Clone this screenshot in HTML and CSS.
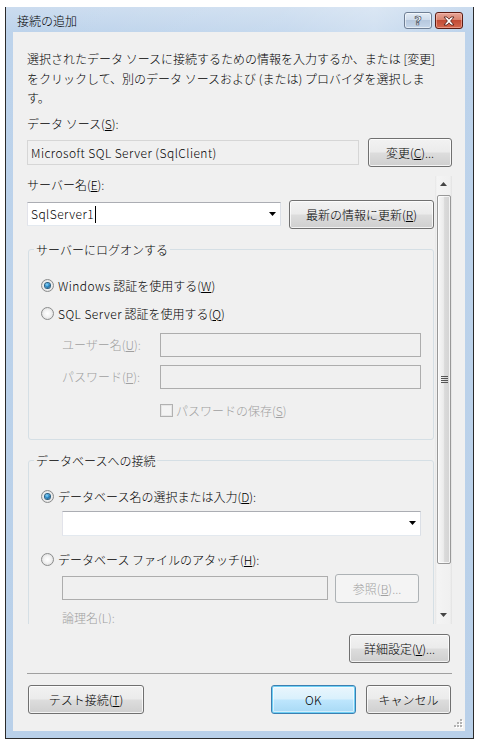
FILE: index.html
```html
<!DOCTYPE html>
<html lang="ja">
<head>
<meta charset="utf-8">
<title>接続の追加</title>
<link rel="stylesheet" href="styles.css">
</head>
<body>
<div class="window">
  <div class="titlebar">
    <span class="title">接続の追加</span>
    <div class="caption-buttons">
      <span class="cap-btn help">?</span>
      <span class="cap-btn close">
        <svg width="14" height="10" viewBox="0 0 14 10"><path d="M2 1h3l2 2.2L9 1h3L8.6 5 12 9H9L7 6.8 5 9H2l3.4-4z" fill="#fff" stroke="#4a1510" stroke-width="0.8" stroke-linejoin="round"/></svg>
      </span>
    </div>
  </div>
  <div class="client">
    <p class="desc">選択されたデータ ソースに接続するための情報を入力するか、または [変更]<br>をクリックして、別のデータ ソースおよび (または) プロバイダを選択しま<br>す。</p>
    <div class="label first-label">データ ソース(<u>S</u>):</div>
    <div class="ds-row">
      <div class="textbox readonly ds-box"><span class="latin">Microsoft SQL Server (SqlClient)</span></div>
      <button class="btn change-btn">変更(<u>C</u>)...</button>
    </div>

    <div class="scroll-panel">
      <div class="scroll-content">
        <div class="label">サーバー名(<u>E</u>):</div>
        <div class="server-row">
          <div class="combo server-combo">
            <span class="combo-text"><span class="latin">SqlServer1</span><span class="caret"></span></span>
            <svg class="arrow" width="7" height="4" viewBox="0 0 7 4"><path d="M0 0h7L3.5 4z" fill="#000"/></svg>
          </div>
          <button class="btn refresh-btn">最新の情報に更新(<u>R</u>)</button>
        </div>

        <fieldset class="group">
          <legend>サーバーにログオンする</legend>
          <div class="group-body">
            <div class="opt-row">
              <span class="radio checked"></span><span><span class="latin">Windows</span> 認証を使用する(<u>W</u>)</span>
            </div>
            <div class="opt-row gap10">
              <span class="radio"></span><span><span class="latin">SQL Server</span> 認証を使用する(<u>Q</u>)</span>
            </div>
            <div class="field-row user-row">
              <span class="field-label disabled">ユーザー名(<u>U</u>):</span>
              <div class="textbox disabled-box grow"></div>
            </div>
            <div class="field-row pass-row">
              <span class="field-label disabled">パスワード(<u>P</u>):</span>
              <div class="textbox disabled-box grow"></div>
            </div>
            <div class="check-row">
              <span class="checkbox"></span><span class="disabled">パスワードの保存(<u>S</u>)</span>
            </div>
          </div>
        </fieldset>

        <fieldset class="group group2">
          <legend>データベースへの接続</legend>
          <div class="group-body">
            <div class="opt-row">
              <span class="radio checked"></span><span>データベース名の選択または入力(<u>D</u>):</span>
            </div>
            <div class="combo db-combo">
              <span class="combo-text"></span>
              <svg class="arrow" width="7" height="4" viewBox="0 0 7 4"><path d="M0 0h7L3.5 4z" fill="#000"/></svg>
            </div>
            <div class="opt-row gap15">
              <span class="radio"></span><span>データベース ファイルのアタッチ(<u>H</u>):</span>
            </div>
            <div class="attach-row">
              <div class="textbox disabled-box attach-box"></div>
              <button class="btn disabled-btn browse-btn">参照(<u>B</u>)...</button>
            </div>
            <div class="logical-label disabled">論理名(<u>L</u>):</div>
            <div class="textbox disabled-box logical-box"></div>
          </div>
        </fieldset>
      </div>
      <div class="scrollbar">
        <div class="sb-arrow">
          <svg width="7" height="4" viewBox="0 0 7 4"><path d="M0 4h7L3.5 0z" fill="#444"/></svg>
        </div>
        <div class="sb-track">
          <div class="sb-thumb"><span class="grip-lines"></span></div>
        </div>
        <div class="sb-arrow">
          <svg width="7" height="4" viewBox="0 0 7 4"><path d="M0 0h7L3.5 4z" fill="#444"/></svg>
        </div>
      </div>
    </div>

    <div class="advanced-row">
      <button class="btn advanced-btn">詳細設定(<u>V</u>)...</button>
    </div>
    <div class="separator"></div>
    <div class="bottom-row">
      <button class="btn test-btn">テスト接続(<u>T</u>)</button>
      <div class="spacer"></div>
      <button class="btn default-btn ok-btn"><span class="latin">OK</span></button>
      <button class="btn cancel-btn">キャンセル</button>
    </div>
    <svg class="size-grip" width="9" height="9" viewBox="0 0 9 9">
      <g fill="#fff"><rect x="7" y="1" width="2" height="2"/><rect x="4" y="4" width="2" height="2"/><rect x="7" y="4" width="2" height="2"/><rect x="1" y="7" width="2" height="2"/><rect x="4" y="7" width="2" height="2"/><rect x="7" y="7" width="2" height="2"/></g>
      <g fill="#b2b2b2"><rect x="6" y="0" width="2" height="2"/><rect x="3" y="3" width="2" height="2"/><rect x="6" y="3" width="2" height="2"/><rect x="0" y="6" width="2" height="2"/><rect x="3" y="6" width="2" height="2"/><rect x="6" y="6" width="2" height="2"/></g>
    </svg>
  </div>
</div>
</body>
</html>
```

FILE: styles.css
```css
* { box-sizing: border-box; }

html, body {
  margin: 0;
  padding: 0;
  background: #ffffff;
}

body {
  font-family: "Noto Sans CJK JP", "Noto Sans", sans-serif;
  font-size: 12px;
  font-weight: 300;
  color: #000;
}

.latin {
  letter-spacing: 0.45px;
}

u {
  text-decoration: underline;
  text-underline-offset: 1px;
}

.window {
  margin: 7px 0 0 5px;
  width: 469px;
  height: 732px;
  border: 1px solid #2b2b2b;
  border-top: none;
  background: linear-gradient(to bottom, #cbdcef 0px, #bdd3eb 25px, #b9d0e9 100%);
  padding: 0 8px 7px 7px;
}

.titlebar {
  height: 25px;
  display: flex;
  align-items: flex-start;
  justify-content: space-between;
  background: linear-gradient(to right, rgba(255,255,255,0) 0%, rgba(255,255,255,0.15) 60%, rgba(255,255,255,0.3) 80%, rgba(255,255,255,0) 100%);
}

.title {
  padding: 5px 0 0 4px;
  line-height: 18px;
  color: #000;
}

.caption-buttons {
  display: flex;
  gap: 3px;
  margin-top: 5px;
  margin-right: 2px;
}

.cap-btn {
  width: 28px;
  height: 17px;
  border-radius: 3px;
  display: flex;
  align-items: center;
  justify-content: center;
}

.help {
  border: 1px solid #6e7e94;
  background: linear-gradient(to bottom, #e2ebf5 0%, #cfdcec 45%, #b6c8de 50%, #c5d6ea 100%);
  box-shadow: inset 0 0 0 1px rgba(255,255,255,0.55);
  font-family: "DejaVu Sans", sans-serif;
  font-weight: bold;
  font-size: 13px;
  line-height: 15px;
  color: #f8f8f8;
  -webkit-text-stroke: 0.7px #46505e;
}

.close {
  border: 1px solid #5b1b12;
  background: linear-gradient(to bottom, #e6a598 0%, #d98570 45%, #c24b35 50%, #d4684f 100%);
  box-shadow: inset 0 0 0 1px rgba(255,200,190,0.5);
}

.client {
  position: relative;
  height: 699px;
  background: #f0f0f0;
  padding: 17px 13px 0 14px;
}

.desc {
  margin: 0;
  line-height: 19.5px;
  white-space: nowrap;
}

.label {
  line-height: 18px;
}

.first-label {
  margin-top: 7px;
}

.ds-row {
  display: flex;
  align-items: center;
  gap: 9px;
  margin-top: 5px;
}

.textbox {
  height: 24px;
  border: 1px solid #abadb3;
  background: #fff;
}

.readonly {
  border-color: #d6d6d6;
  background: #f0f0f0;
  height: 25px;
  line-height: 23px;
  padding-left: 3px;
  white-space: nowrap;
}

.ds-box {
  width: 332px;
}

.btn {
  height: 29px;
  padding: 0;
  margin: 0;
  font-family: inherit;
  font-size: 12px;
  font-weight: inherit;
  color: #000;
  border: 1px solid #707070;
  border-radius: 3px;
  background: linear-gradient(to bottom, #f2f2f2 0%, #ebebeb 49%, #dddddd 51%, #cfcfcf 100%);
  box-shadow: inset 0 0 0 1px rgba(255,255,255,0.75);
  line-height: 27px;
  text-align: center;
  white-space: nowrap;
}

.change-btn { width: 84px; }

.scroll-panel {
  display: flex;
  margin-top: 9px;
  height: 448px;
}

.scroll-content {
  flex: 1;
  overflow: hidden;
}

.server-row {
  display: flex;
  align-items: center;
  gap: 8px;
  margin-top: 6px;
}

.combo {
  display: flex;
  align-items: center;
  justify-content: space-between;
  background: #fff;
  border: 1px solid;
  border-color: #abadb3 #dbdfe6 #e3e9ef #e2e3ea;
  padding: 0 4px 0 3px;
}

.server-combo {
  width: 254px;
  height: 24px;
}

.combo-text {
  display: flex;
  align-items: center;
  line-height: 18px;
}

.caret {
  display: inline-block;
  width: 1px;
  height: 17px;
  background: #000;
  margin-left: 1px;
}

.arrow { flex: none; }

.refresh-btn { width: 145px; }

.group {
  margin: 12px 1px 0 1px;
  padding: 0;
  border: 1px solid #d5dfe5;
  border-radius: 3px;
  min-width: 0;
}

.group legend {
  margin-left: 5px;
  padding: 0 2px;
  line-height: 18px;
}

.group-body {
  padding: 18px 12px 19px 12px;
}

.opt-row {
  display: flex;
  align-items: center;
  gap: 4px;
  height: 18px;
  line-height: 18px;
}

.gap10 { margin-top: 10px; }
.gap15 { margin-top: 15px; }

.radio {
  flex: none;
  width: 13px;
  height: 13px;
  border-radius: 50%;
  border: 1px solid #8b8c8c;
  background: radial-gradient(circle at 50% 50%, #ffffff 0%, #f4f4f4 40%, #d4d4d4 100%);
  display: flex;
  align-items: center;
  justify-content: center;
}

.radio.checked::after {
  content: "";
  width: 5px;
  height: 5px;
  border-radius: 50%;
  background: radial-gradient(circle at 40% 35%, #8fdcff 0%, #2a8ac8 45%, #0f3a5e 100%);
  box-shadow: 0 0 0 1px #2b5f80;
}

.field-row {
  display: flex;
  align-items: center;
  margin-left: 21px;
  height: 24px;
}

.user-row { margin-top: 10px; }
.pass-row { margin-top: 8px; }

.field-label {
  width: 98px;
  flex: none;
  line-height: 18px;
}

.disabled { color: #a0a0a0; }

.disabled-box {
  background: #f0f0f0;
  border-color: #adadad;
}

.grow { flex: 1; }

.check-row {
  display: flex;
  align-items: center;
  gap: 3px;
  margin-top: 13px;
  margin-left: 119px;
  height: 18px;
  line-height: 18px;
}

.checkbox {
  flex: none;
  width: 13px;
  height: 13px;
  border: 1px solid #b1b1b1;
  background: #f4f4f4;
  box-shadow: inset 0 0 0 1px #e6e6e6;
}

.group2 { margin-top: 12px; }

.db-combo {
  margin: 5px 0 0 21px;
  height: 25px;
}

.attach-row {
  display: flex;
  align-items: center;
  gap: 7px;
  margin: 5px 0 0 21px;
}

.attach-box { width: 266px; }

.browse-btn { width: 84px; }

.disabled-btn {
  color: #a0a0a0;
  border-color: #adb2b5;
  background: #f4f4f4;
  box-shadow: none;
}

.logical-label {
  margin: 6px 0 0 21px;
  line-height: 18px;
}

.logical-box {
  margin: 4px 0 0 21px;
}

.scrollbar {
  width: 17px;
  flex: none;
  display: flex;
  flex-direction: column;
  background: linear-gradient(to right, #e6e6e6 0px, #f4f4f4 2px, #f0f0f0 15px, #e2e2e2 17px);
}

.sb-arrow {
  height: 17px;
  display: flex;
  align-items: center;
  justify-content: center;
}

.sb-track {
  flex: 1;
}

.sb-thumb {
  margin: 2px 1px 0 2px;
  height: 369px;
  border: 1px solid #989898;
  border-radius: 2px;
  background: linear-gradient(to right, #f7f7f7 0%, #ececec 45%, #dadada 55%, #d3d3d3 100%);
  box-shadow: inset 0 0 0 1px rgba(255,255,255,0.7);
  display: flex;
  align-items: center;
  justify-content: center;
}

.grip-lines {
  width: 7px;
  height: 7px;
  background: repeating-linear-gradient(to bottom, #555 0px, #555 1px, transparent 1px, transparent 2px);
}

.advanced-row {
  display: flex;
  justify-content: flex-end;
  margin-top: 10px;
  padding-right: 2px;
}

.advanced-btn { width: 101px; }

.separator {
  margin-top: 10px;
  height: 1px;
  background: #a0a0a0;
}

.bottom-row {
  display: flex;
  align-items: center;
  margin-top: 11px;
  padding: 0 1px 0 1px;
}

.test-btn { width: 116px; }

.spacer { flex: 1; }

.ok-btn { width: 85px; margin-right: 10px; }

.cancel-btn { width: 85px; }

.default-btn {
  border-color: #3c7fb1;
  background: linear-gradient(to bottom, #eaf6fd 0%, #d9f0fc 49%, #bee6fd 51%, #a7d9f5 100%);
  box-shadow: inset 0 0 0 1px #6fd0f5, inset 0 0 0 2px rgba(255,255,255,0.5);
}

.size-grip {
  position: absolute;
  right: 2px;
  bottom: 3px;
}
```
